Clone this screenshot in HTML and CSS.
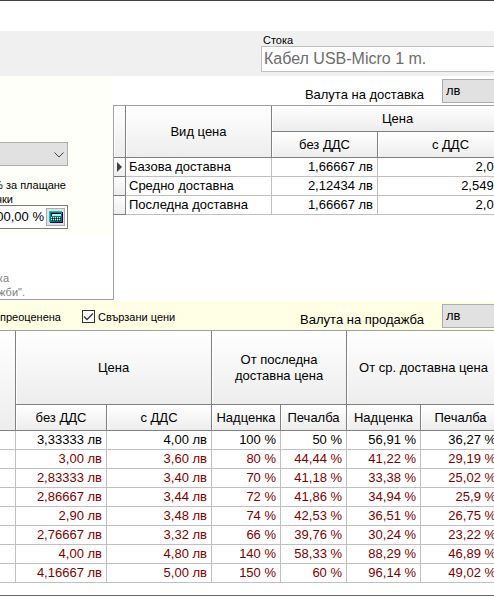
FILE: index.html
```html
<!DOCTYPE html>
<html lang="bg">
<head>
<meta charset="utf-8">
<title>Цени</title>
<link rel="stylesheet" href="styles.css">
</head>
<body>
<main class="window">
  <header class="item-bar">
    <div class="item">
      <label class="small" for="item">Стока</label>
      <input class="item-name" id="item" type="text" value="Кабел USB-Micro 1 m." readonly>
    </div>
  </header>

  <section class="delivery">
    <form class="side">
      <div class="side-fields">
        <div class="combo side-combo">
          <select class="select" aria-label="Вид плащане"><option></option></select>
          <svg class="chevron" viewBox="0 0 10 6" aria-hidden="true"><path d="M.5 .5 5 5 9.500 .5"/></svg>
        </div>
        <label class="small side-label" for="percent"><span class="clip-long">% за плащане</span><span class="clip-short">чки</span></label>
        <div class="percent-box">
          <input class="percent" id="percent" type="text" value="100,00 %">
          <button class="calc" type="button" aria-label="Калкулатор">
            <svg viewBox="0 0 14 12" aria-hidden="true">
              <path fill="#000050" d="M1 1h13v11H1z"/>
              <path fill="#008080" d="M0 0h13v11H0z"/>
              <path fill="#00c8c8" d="M0 0h13v1H1v10H0z"/>
              <path fill="#000" d="M2 2h10v3H2z"/>
              <path fill="#b0f0f0" d="M3 3h9v2H3z"/>
              <path fill="#fff" d="M2 6h1v1H2zm2 0h1v1H4zm2 0h1v1H6zm2 0h1v1H8zm2 0h1v1h-1zM2 8h1v1H2zm2 0h1v1H4zm2 0h1v1H6zm2 0h1v1H8zm2 0h1v1h-1z"/>
              <path fill="#000" d="M3 7h1v1H3zm2 0h1v1H5zm2 0h1v1H7zm2 0h1v1H9zm2 0h1v1h-1zM3 9h1v1H3zm2 0h1v1H5zm2 0h1v1H7zm2 0h1v1H9zm2 0h1v1h-1z"/>
            </svg>
          </button>
        </div>
      </div>
      <p class="small hint"><span class="hint-first">ка</span><span class="hint-last">жби".</span></p>
    </form>

    <div class="delivery-main">
      <div class="currency">
        <label for="buy-currency">Валута на доставка</label>
        <select class="select" id="buy-currency"><option>лв</option></select>
      </div>
      <div class="grid-frame">
        <table class="grid buy-grid">
          <colgroup><col class="c-mark"><col class="c-kind"><col class="c-net"><col class="c-gross"></colgroup>
          <thead>
            <tr><th rowspan="2"></th><th rowspan="2">Вид цена</th><th colspan="2">Цена</th></tr>
            <tr><th>без ДДС</th><th>с ДДС</th></tr>
          </thead>
          <tbody>
            <tr><td class="mark"><svg viewBox="0 0 5 10" aria-hidden="true"><path d="M0 0 5 5 0 10z"/></svg></td><td class="name">Базова доставна</td><td>1,66667 лв</td><td>2,00 лв</td></tr>
            <tr><td class="mark"></td><td class="name">Средно доставна</td><td>2,12434 лв</td><td>2,5492 лв</td></tr>
            <tr><td class="mark"></td><td class="name">Последна доставна</td><td>1,66667 лв</td><td>2,00 лв</td></tr>
          </tbody>
        </table>
      </div>
    </div>
  </section>

  <div class="sales-bar">
    <span class="small revalued">преоценена</span>
    <label class="small linked"><input class="check" type="checkbox" checked>Свързани цени</label>
    <div class="currency">
      <label for="sell-currency">Валута на продажба</label>
      <select class="select" id="sell-currency"><option>лв</option></select>
    </div>
  </div>

  <div class="sales">
    <table class="grid sell-grid">
      <colgroup><col class="s-lead"><col class="s-net"><col class="s-gross"><col class="s-last-markup"><col class="s-last-profit"><col class="s-avg-markup"><col class="s-avg-profit"></colgroup>
      <thead>
        <tr class="tall"><th rowspan="2" class="lead"></th><th colspan="2">Цена</th><th colspan="2">От последна<br>доставна цена</th><th colspan="2">От ср. доставна цена</th></tr>
        <tr><th>без ДДС</th><th>с ДДС</th><th>Надценка</th><th>Печалба</th><th>Надценка</th><th>Печалба</th></tr>
      </thead>
      <tbody>
        <tr class="base"><td></td><td>3,33333 лв</td><td>4,00 лв</td><td>100 %</td><td>50 %</td><td>56,91 %</td><td>36,27 %</td></tr>
        <tr><td></td><td>3,00 лв</td><td>3,60 лв</td><td>80 %</td><td>44,44 %</td><td>41,22 %</td><td>29,19 %</td></tr>
        <tr><td></td><td>2,83333 лв</td><td>3,40 лв</td><td>70 %</td><td>41,18 %</td><td>33,38 %</td><td>25,02 %</td></tr>
        <tr><td></td><td>2,86667 лв</td><td>3,44 лв</td><td>72 %</td><td>41,86 %</td><td>34,94 %</td><td>25,9 %</td></tr>
        <tr><td></td><td>2,90 лв</td><td>3,48 лв</td><td>74 %</td><td>42,53 %</td><td>36,51 %</td><td>26,75 %</td></tr>
        <tr><td></td><td>2,76667 лв</td><td>3,32 лв</td><td>66 %</td><td>39,76 %</td><td>30,24 %</td><td>23,22 %</td></tr>
        <tr><td></td><td>4,00 лв</td><td>4,80 лв</td><td>140 %</td><td>58,33 %</td><td>88,29 %</td><td>46,89 %</td></tr>
        <tr><td></td><td>4,16667 лв</td><td>5,00 лв</td><td>150 %</td><td>60 %</td><td>96,14 %</td><td>49,02 %</td></tr>
      </tbody>
    </table>
  </div>
</main>
</body>
</html>
```
FILE: styles.css
```css
* { box-sizing: border-box; }

body {
  margin: 0;
  background: #fff;
  color: #000;
  font: 13px/18px "Liberation Sans", Arial, sans-serif;
}

input, select, button { font: inherit; color: inherit; }

.small { font-size: 11px; line-height: 14px; }

.window {
  display: flex;
  flex-direction: column;
  overflow: hidden;
  border-top: 1px solid #404040;
  padding-top: 30px;
}

/* Item header */
.item-bar {
  display: flex;
  height: 45px;
  padding: 2px 0 0 261px;
  background: #f0f0f0;
}
.item { display: flex; flex: 1; flex-direction: column; margin-right: -4px; }
.item label { padding-left: 2px; height: 13px; }
.item-name {
  width: 100%;
  height: 26px;
  padding: 0 2px;
  border: 1px solid #c0c0c0;
  background: #fff;
  color: #6d6d6d;
  font-size: 16px;
}

/* Delivery prices */
.delivery { display: flex; height: 225px; }
.side {
  display: flex;
  flex-direction: column;
  flex: 0 0 113px;
  height: 224px;
  overflow: hidden;
  border-bottom: 1px solid #a0a0a0;
}
.side-fields {
  height: 162px;
  padding-top: 66px;
  background: #fffffa;
}
.combo { position: relative; width: 72px; margin-left: -4px; }
.side-combo .select { width: 100%; }
.select {
  display: block;
  height: 24px;
  padding: 0 3px;
  border: 1px solid #adadad;
  border-radius: 0;
  background: #e1e1e1;
  appearance: none;
}
.chevron {
  position: absolute;
  right: 4px;
  top: 10px;
  width: 10px;
  height: 6px;
  fill: none;
  stroke: #404040;
}
.side-label { display: block; width: 66px; margin-top: 12px; }
.side-label span, .hint span {
  display: flex;
  justify-content: flex-end;
  white-space: nowrap;
}
.clip-short { width: 13px; }
.percent-box {
  display: flex;
  align-items: center;
  width: 72px;
  height: 24px;
  margin: -1px 0 0 -4px;
  padding-right: 2px;
  border: 1px solid #7a7a7a;
  background: #fff;
}
.percent {
  flex: 1;
  min-width: 0;
  margin-left: -20px;
  padding: 0 2px;
  border: 0;
  background: none;
  text-align: right;
}
.calc {
  display: flex;
  align-items: center;
  justify-content: center;
  width: 19px;
  height: 18px;
  padding: 0;
  border: 1px solid #adadad;
  background: #e1e1e1;
}
.calc svg { flex: none; width: 14px; height: 12px; }
.hint { margin: 35px 0 0; color: #808080; }
.hint-first { width: 9px; }
.hint-last { width: 25px; }

.delivery-main { display: flex; flex: 1; flex-direction: column; min-width: 0; }
.currency {
  display: flex;
  flex: 1;
  align-items: center;
  justify-content: flex-end;
  gap: 18px;
  margin-right: -4px;
}
.currency label { padding-top: 8px; }
.currency .select { width: 56px; }
.delivery-main .currency { flex: 0 0 29px; }
.grid-frame {
  height: 195px;
  overflow: hidden;
  border: solid #a0a0a0;
  border-width: 1px 0 0 1px;
}

/* Data grids */
.grid { table-layout: fixed; border-collapse: separate; border-spacing: 0; }
.grid th, .grid td { padding: 0; border: solid #c0c0c0; border-width: 0 1px 1px 0; white-space: nowrap; }
.grid th {
  height: 26px;
  border-color: #808080;
  background: linear-gradient(#fff, #ededed);
  box-shadow: inset 1px 0 #fff;
  font-weight: normal;
  line-height: 16px;
}
.grid .lead { box-shadow: none; }
.grid td { height: 19px; padding-right: 4px; text-align: right; }
.grid .name { padding-left: 3px; text-align: left; }
.grid .mark {
  padding: 0 0 0 3px;
  border-color: #808080;
  background: linear-gradient(#fff, #ededed);
  text-align: left;
}
.mark svg { display: block; width: 5px; height: 10px; fill: #404040; }
.buy-grid { width: 410px; }
.c-mark { width: 12px; }
.c-kind { width: 146px; }
.c-net { width: 106px; }
.c-gross { width: 146px; }

/* Sales prices */
.sales-bar {
  display: flex;
  align-items: center;
  height: 29px;
  background: #ffffe6;
}
.revalued { width: 60px; text-align: right; padding-top: 2px; }
.linked { display: flex; align-items: center; gap: 3px; margin-left: 22px; padding-top: 2px; }
.check {
  appearance: none;
  width: 13px;
  height: 13px;
  margin: 0;
  border: 1px solid #333;
  background: #fff url("data:image/svg+xml,%3Csvg xmlns='http://www.w3.org/2000/svg' viewBox='0 0 11 11'%3E%3Cpath d='M1 5.500 4 8.500 10 2.500' fill='none' stroke='%23333' stroke-width='1.300'/%3E%3C/svg%3E");
}
.sales {
  overflow: hidden;
  padding-bottom: 12px;
  border: solid #a0a0a0;
  border-width: 1px 0 0;
  box-shadow: inset 0 -1px #666;
  min-height: 266px;
}
.sell-grid { width: 501px; color: #800000; }
.sell-grid th, .sell-grid .base { color: #000; }
.sell-grid .tall th { height: 74px; }
.s-lead { width: 16px; }
.s-net { width: 91px; }
.s-gross { width: 105px; }
.s-last-markup { width: 69px; }
.s-last-profit { width: 66px; }
.s-avg-markup { width: 74px; }
.s-avg-profit { width: 80px; }
```
